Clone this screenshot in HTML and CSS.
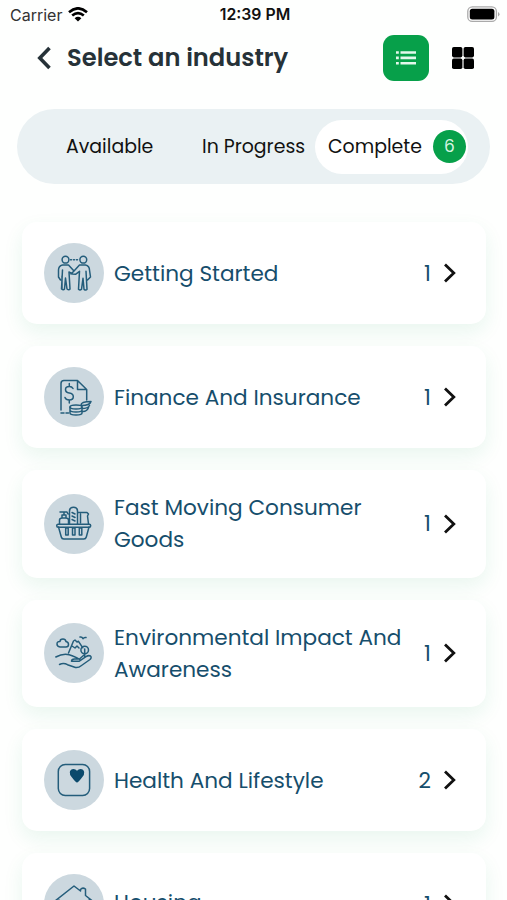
FILE: index.html
```html
<!DOCTYPE html>
<html lang="en">
  <head>
    <meta charset="UTF-8" />
    <meta name="viewport" content="width=device-width, initial-scale=1.0" />
    <title>Select an industry</title>
    <link rel="stylesheet" href="styles.css">
  </head>
  <body>
    <div class="status-bar">
      <div class="carrier">
        <span>Carrier</span>
        <svg width="20" height="15" viewBox="0 0 20 15" fill="none" stroke="#000" stroke-width="2.6">
          <path d="M1 5.2Q10-2.6 19 5.2M4.2 8.6Q10 3.5 15.8 8.6" />
          <path d="M6.6 11.2Q10 8.4 13.4 11.2L10 14.6Z" fill="#000" stroke="none" />
        </svg>
      </div>
      <span class="time">12:39 PM</span>
      <svg class="battery" width="33" height="17" viewBox="0 0 33 17">
        <rect x=".8" y=".8" width="28.6" height="14.6" rx="4.5" fill="#fff" stroke="#aaa" stroke-width="1.3" />
        <rect x="2.8" y="2.8" width="24.6" height="10.6" rx="2.5" />
        <path d="M31 6v4.5q1.5-.8 1.5-2.2T31 6Z" fill="#aaa" />
      </svg>
    </div>

    <header>
      <svg class="back" width="16" height="24" viewBox="0 0 16 24" fill="none" stroke="#263238" stroke-width="3.6">
        <path d="M14.5 2L4.8 12L14.5 22" />
      </svg>
      <h1>Select an industry</h1>
      <button class="list-btn">
        <svg width="22" height="16" viewBox="0 0 22 16" fill="#e4f8ec">
          <path d="M1 1.2h2.8v2.6H1zM5.5 1.2H21v2.6H5.5zM1 6.6h2.8v2.6H1zM5.5 6.6H21v2.6H5.5zM1 12h2.8v2.6H1zM5.5 12H21v2.6H5.5z" />
        </svg>
      </button>
      <svg class="grid-icon" width="22" height="22" viewBox="0 0 22 22">
        <rect width="10.4" height="10.4" rx="1.8" />
        <rect x="11.6" width="10.4" height="10.4" rx="1.8" />
        <rect y="11.6" width="10.4" height="10.4" rx="1.8" />
        <rect x="11.6" y="11.6" width="10.4" height="10.4" rx="1.8" />
      </svg>
    </header>

    <nav class="tabs">
      <span class="tab available">Available</span>
      <span class="tab progress">In Progress</span>
      <span class="tab active">Complete <b class="badge">6</b></span>
    </nav>

    <main class="list">
      <div class="card">
        <svg class="icon" viewBox="0 0 60 60">
          <circle cx="21.5" cy="16.7" r="3.4" />
          <circle cx="39.3" cy="16.7" r="3.4" />
          <path d="M26.5 16.8h8" stroke-dasharray="1 2" />
          <path d="M18 46V33M14.5 34V27q0-4 4-5h6l5.5 6 5.5-6h6q4 1 4 5l1 7-3 3M14.5 34l2 3M18.5 27l-1 19q2 1.5 3 0l1-11 1.5 11q2 1.500 3 0l-1-17 3.500 2 3 .3 4-3-1 18q1.500 1.500 3 0l1.500-11 1 11q2 1.500 3 0l-1-18M30 28l-3 3" />
        </svg>
        <p class="name">Getting Started</p>
        <span class="count">1</span>
        <svg class="arrow" viewBox="0 0 14 20"><path d="M2 1.5L10.8 10L2 18.5" /></svg>
      </div>

      <div class="card">
        <svg class="icon" viewBox="0 0 60 60">
          <path d="M17 43V16.5q0-3 3-3h13.5l9.2 9V33M33.500 13.500v9h9.200M17 46h3M22 46h2.500" />
          <path d="M29 21.5q-1-2-3.7-2-3.8 0-3.8 3t3.800 3.500q4 .5 4 3.700t-4 3.200q-3.500 0-4.300-2.500M25.300 16.500v3M25.300 33v3" />
          <ellipse cx="32" cy="40" rx="6" ry="2" />
          <path d="M26 40v6q0 2 6 2t6-2v-6M26 43q0 2 6 2t6-2M37 38q0-3.5 10-3.5-1 4-9.500 4M38 41.500q6 0 7.500-3M39 44.500q4 0 5.500-4" />
        </svg>
        <p class="name">Finance And Insurance</p>
        <span class="count">1</span>
        <svg class="arrow" viewBox="0 0 14 20"><path d="M2 1.5L10.8 10L2 18.5" /></svg>
      </div>

      <div class="card tall">
        <svg class="icon" viewBox="0 0 60 60">
          <rect x="12.7" y="30.2" width="34" height="3" rx="1.5" />
          <path d="M14.5 33l2.8 10q.5 2 2.5 2h20q2 0 2.500-2l2.700-10M25.500 30V17q0-3.800 4-3.800t4 3.800v13M28 18.500l3 1.500M28 22l3 1.500M28 25.500l3 1.500M34.500 18.500h8.500l1.500 1.500-1 2 1 8M36.500 20v9M15.500 30v-4q0-2 3-2h3q3 0 3 2v4M18 24v-3h4v3M20 21v-3h-4M20 18h3l1 2" />
          <path d="M21.7 34h2.5v7h-2.5zM28.5 34H31v7h-2.5zM35.3 34h2.5v7h-2.5z" />
        </svg>
        <p class="name">Fast Moving Consumer Goods</p>
        <span class="count">1</span>
        <svg class="arrow" viewBox="0 0 14 20"><path d="M2 1.5L10.8 10L2 18.5" /></svg>
      </div>

      <div class="card tall">
        <svg class="icon" viewBox="0 0 60 60">
          <path d="M16 24q-3-.3-3-3t3-2.5q0-2.5 3-2.5 2.5 0 3 2.500 2.500.5 2.500 3t-2.500 2.500ZM24.500 30l5-12 1.500-1 2 2 1.500-.7 4.300 6.500M28 23l3 2 2-2 2 2M36 14q2-.5 3 1.700 1-1.700 3-1.200" />
          <circle cx="40.7" cy="27" r="3.8" />
          <path d="M40.7 26v8M11.8 34q9-5 17-1 5 2 7 3.500M15.500 41.500q4-2.300 8 .2l8 2.800q3 .5 6-2l8.500-6q2-2.200.5-3.500-2-1-4.500.7L35 38.300h-7.500q0-2.300 3-2.300h5l4.500-4" />
        </svg>
        <p class="name">Environmental Impact And Awareness</p>
        <span class="count">1</span>
        <svg class="arrow" viewBox="0 0 14 20"><path d="M2 1.5L10.8 10L2 18.5" /></svg>
      </div>

      <div class="card">
        <svg class="icon" viewBox="0 0 60 60">
          <rect x="14.3" y="14.5" width="31.3" height="31" rx="7" />
          <path class="filled" d="M33 32.5q-1.2 0-5-5-2.700-3-2.200-5.500.7-3 3.700-3 2 0 3.500 1.800Q34.500 19 36.500 19q3 0 3.700 3 .5 2.500-2.200 5.500-3.800 5-5 5Z" />
        </svg>
        <p class="name">Health And Lifestyle</p>
        <span class="count">2</span>
        <svg class="arrow" viewBox="0 0 14 20"><path d="M2 1.5L10.8 10L2 18.5" /></svg>
      </div>

      <div class="card last">
        <svg class="icon" viewBox="0 0 60 60">
          <path d="M11 27l19-15 6.5 5v-1.5q2-2.500 5-.5v6.500l7 5.500M15 26v19h30V26" />
        </svg>
        <p class="name">Housing</p>
        <span class="count">1</span>
        <svg class="arrow" viewBox="0 0 14 20"><path d="M2 1.5L10.8 10L2 18.5" /></svg>
      </div>
    </main>
  </body>
</html>
```

FILE: styles.css
```css
body {
  font-family: Poppins, Inter, sans-serif;
  margin: 0;
  height: 900px;
  overflow: hidden;
  background-color: #fefffe;
  color: #111;
}

.status-bar {
  display: grid;
  grid-template-columns: 1fr auto 1fr;
  align-items: center;
  height: 29px;
  padding: 0 7px 0 10px;
  font-family: Inter, sans-serif;
  font-size: 16px;
}

.carrier {
  display: flex;
  align-items: center;
  gap: 6px;
  color: #333;
}

.time {
  font-size: 15.8px;
  font-weight: 600;
  color: #111;
}

.battery {
  justify-self: end;
}

header {
  display: flex;
  align-items: center;
  height: 57px;
  padding: 0 33px 0 35px;
}

h1 {
  flex: 1;
  margin: 0 0 0 16px;
  font-size: 24.2px;
  font-weight: 600;
  color: #263238;
}

.list-btn {
  display: flex;
  align-items: center;
  justify-content: center;
  width: 46px;
  height: 46px;
  margin-right: 23px;
  padding: 0;
  border: none;
  border-radius: 11px;
  background-color: #07a04a;
}

.tabs {
  display: flex;
  align-items: center;
  box-sizing: border-box;
  height: 75px;
  margin: 23px 17px 0;
  padding: 0 22px 0 49px;
  border-radius: 38px;
  background-color: #eaf1f3;
  font-size: 18.9px;
}

.available {
  width: 136px;
}

.progress {
  width: 113px;
  white-space: nowrap;
}

.active {
  display: flex;
  align-items: center;
  justify-content: space-between;
  box-sizing: border-box;
  flex: 1;
  height: 54px;
  padding: 0 2px 0 13px;
  border-radius: 27px;
  background-color: #fff;
}

.badge {
  width: 33px;
  height: 33px;
  border-radius: 50%;
  background-color: #07a04a;
  color: #d8f5e2;
  font-size: 17px;
  font-weight: 400;
  line-height: 33px;
  text-align: center;
}

.list {
  display: flex;
  flex-direction: column;
  gap: 22px;
  padding: 38px 21px 0 22px;
}

.card {
  display: flex;
  align-items: center;
  box-sizing: border-box;
  flex-shrink: 0;
  height: 102px;
  padding: 0 29px 0 22px;
  border-radius: 15px;
  background-color: #fff;
  box-shadow: 0 8px 20px rgba(20, 160, 85, 0.09);
  color: #164e6c;
}

.tall {
  height: 107.5px;
}

.icon {
  flex-shrink: 0;
  width: 60px;
  height: 60px;
  border-radius: 50%;
  background-color: #ccd8df;
  fill: none;
  stroke: #245d7b;
  stroke-width: 1.5;
  stroke-linecap: round;
  stroke-linejoin: round;
}

.filled {
  fill: #0b4a6c;
  stroke: none;
}

.name {
  flex: 1;
  margin: 1px 0 0 10px;
  font-size: 21.6px;
  line-height: 32px;
}

.last .name {
  margin: 0 0 3px 10px;
}

.count {
  width: 18px;
  font-size: 21.6px;
  text-align: right;
}

.arrow {
  width: 14px;
  height: 20px;
  margin-left: 12px;
  fill: none;
  stroke: #111;
  stroke-width: 2.8;
}
```
